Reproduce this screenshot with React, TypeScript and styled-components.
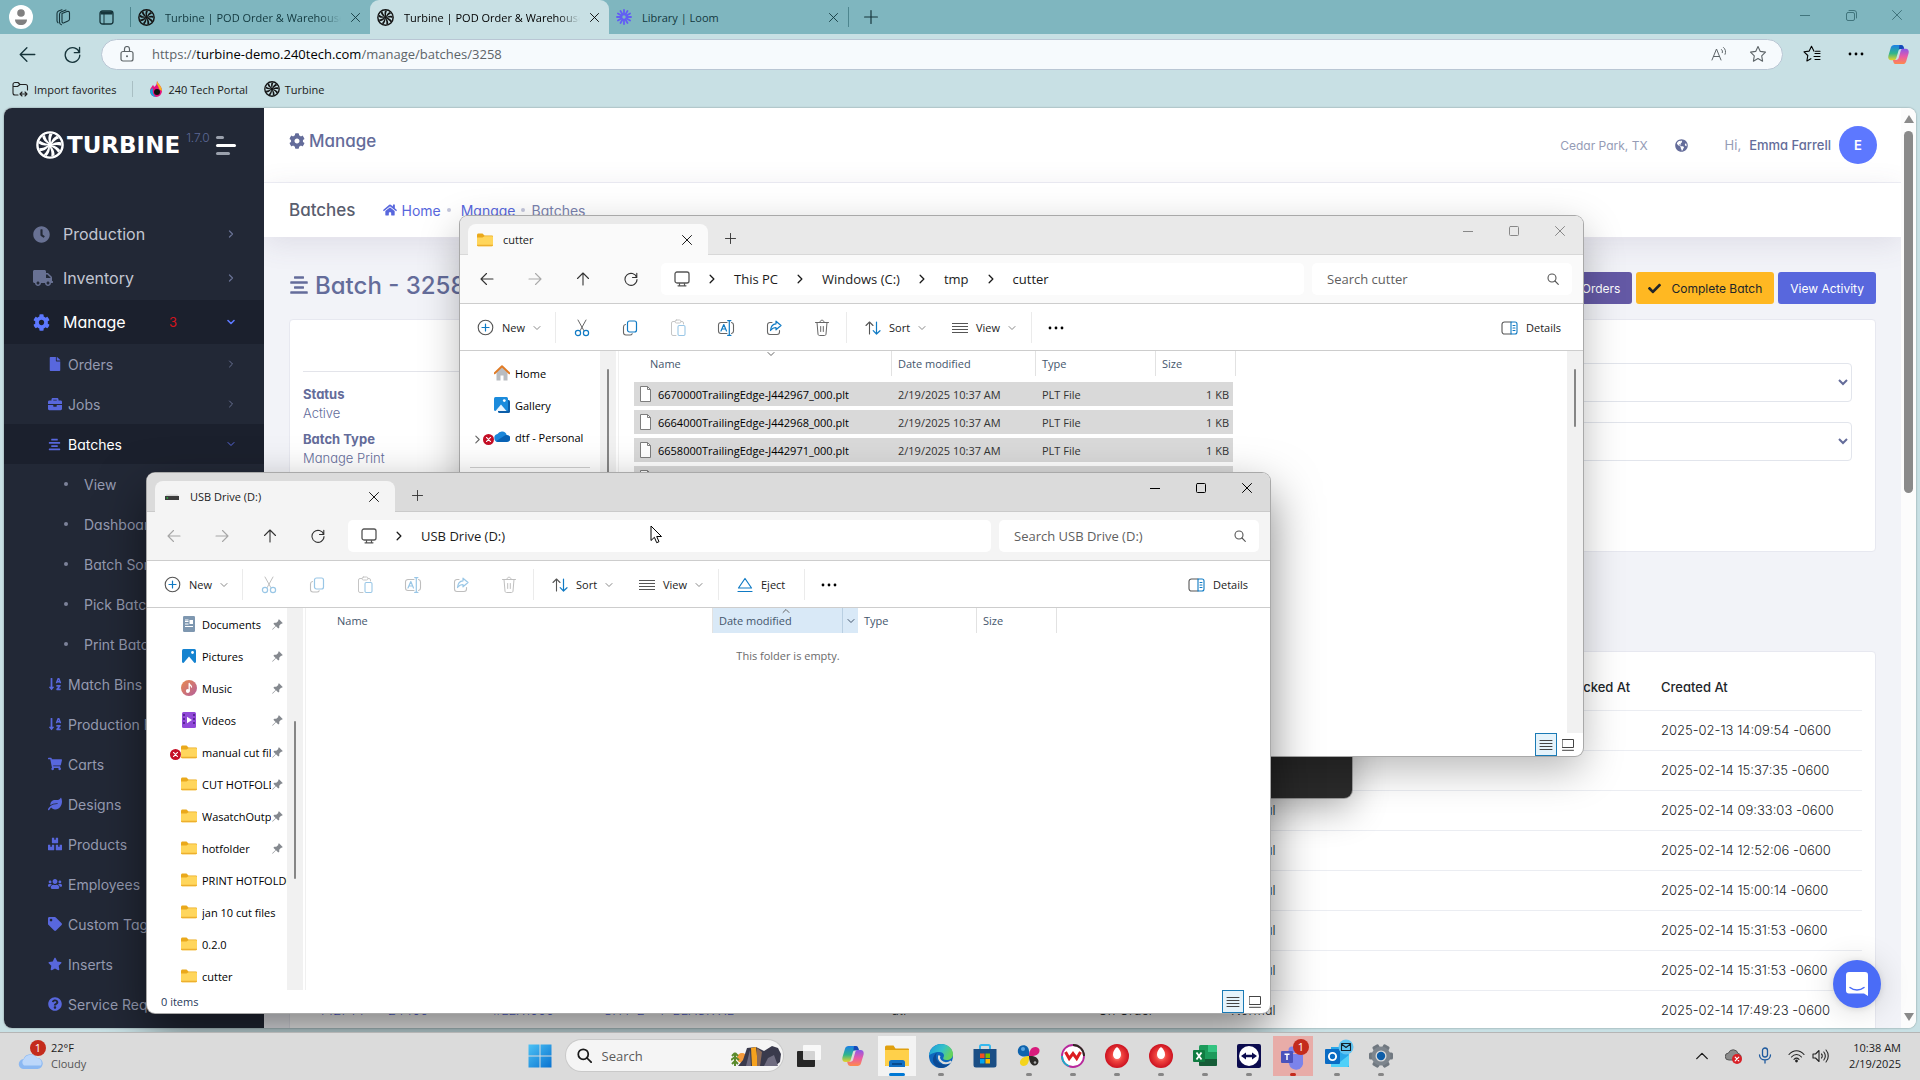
import React from "react";
import styled, { createGlobalStyle, css } from "styled-components";
import {
  FaAlignCenter,
  FaBoxes,
  FaBriefcase,
  FaCheck,
  FaClock,
  FaCog,
  FaFile,
  FaGlobeAmericas,
  FaHome,
  FaLeaf,
  FaQuestionCircle,
  FaShoppingCart,
  FaSortAlphaDown,
  FaStar,
  FaTag,
  FaTruck,
  FaUsers,
} from "react-icons/fa";

const systemFont = `"Open Sans", "Noto Sans", sans-serif`;
const appFont = `Inter, "Open Sans", sans-serif`;

const GlobalStyle = createGlobalStyle`
  * { box-sizing: border-box; }
  html, body, #root { height: 100%; }
  body { margin: 0; overflow: hidden; font-family: ${systemFont}; font-size: 11px; color: #1b1b1b; }
  button, input, select { font: inherit; color: inherit; margin: 0; padding: 0; border: 0; background: none; }
  a { color: inherit; text-decoration: none; }
  ul, dl, dd, h1, h2 { margin: 0; padding: 0; list-style: none; }
  svg { display: block; flex: none; }
`;

/* ---------- shared drawings ---------- */

type IconProps = { size?: number; color?: string };

const stroke = (color = "currentColor", width = 1) => ({
  fill: "none",
  stroke: color,
  strokeWidth: width,
  strokeLinecap: "round" as const,
  strokeLinejoin: "round" as const,
});

const Close = ({ size = 10 }: IconProps) => (
  <svg width={size} height={size} viewBox="0 0 10 10"><path d="M.5.5l9 9M9.5.5l-9 9" {...stroke()} /></svg>
);
const Plus = ({ size = 12 }: IconProps) => (
  <svg width={size} height={size} viewBox="0 0 12 12"><path d="M6 .5v11M.5 6h11" {...stroke()} /></svg>
);
const Minimize = () => (
  <svg width="10" height="10" viewBox="0 0 10 10"><path d="M0 5.500h10" {...stroke()} /></svg>
);
const Maximize = () => (
  <svg width="10" height="10" viewBox="0 0 10 10"><rect x=".5" y=".5" width="9" height="9" rx="1" {...stroke()} /></svg>
);
const Restore = () => (
  <svg width="11" height="11" viewBox="0 0 11 11">
    <rect x=".5" y="2.5" width="8" height="8" rx="1.5" {...stroke()} />
    <path d="M3 .5h5a2.500 2.500 0 0 1 2.500 2.500v5" {...stroke()} />
  </svg>
);
const Chevron = ({ dir = "down", size = 8, width = 1 }: { dir?: "down" | "right" | "up"; size?: number; width?: number }) => {
  const d = { down: "M1 2.500l3 3 3-3", right: "M2.500 1l3 3-3 3", up: "M1 5.500l3-3 3 3" }[dir];
  return <svg width={size} height={size} viewBox="0 0 8 8"><path d={d} {...stroke("currentColor", width)} /></svg>;
};
const Arrow = ({ turn = 0, size = 14 }: { turn?: number; size?: number }) => (
  <svg width={size} height={size} viewBox="0 0 14 14">
    <path d="M13 7H1.200M6.500 1.500L1 7l5.500 5.500" transform={`rotate(${turn} 7 7)`} {...stroke("currentColor", 1.1)} />
  </svg>
);
const Reload = ({ size = 14 }: IconProps) => (
  <svg width={size} height={size} viewBox="0 0 14 14">
    <path d="M12.700 5.500A6 6 0 1 0 13 7.500M12.800 1.200v4.300H8.500" {...stroke("currentColor", 1.1)} />
  </svg>
);
const Magnifier = ({ size = 12, width = 1.1 }: IconProps & { width?: number }) => (
  <svg width={size} height={size} viewBox="0 0 12 12">
    <circle cx="5" cy="5" r="4" {...stroke("currentColor", width)} />
    <path d="M8 8l3.300 3.300" {...stroke("currentColor", width)} />
  </svg>
);

const Turbine = ({ size, ring, blade }: { size: number; ring: string; blade: string }) => (
  <svg width={size} height={size} viewBox="0 0 28 28">
    <circle cx="14" cy="14" r="12.600" fill="none" stroke={ring} strokeWidth="2.400" />
    {Array.from({ length: 9 }, (_, i) => (
      <path key={i} d="M13.400 12C12 8.500 12 5.500 13.400 2.500l3.200.5c-1.600 3-2 6-1.600 9z" fill={blade} transform={`rotate(${i * 40} 14 14)`} />
    ))}
    <circle cx="14" cy="14" r="2.400" fill={ring} />
  </svg>
);

const Loom = () => (
  <svg width="16" height="16" viewBox="0 0 16 16">
    {Array.from({ length: 12 }, (_, i) => (
      <path key={i} d="M8 1v4.500" stroke="#625df5" strokeWidth="1.800" strokeLinecap="round" transform={`rotate(${i * 30} 8 8)`} />
    ))}
    <circle cx="8" cy="8" r="2.800" fill="none" stroke="#625df5" strokeWidth="1.200" />
  </svg>
);

const Copilot = ({ size = 24 }: IconProps) => (
  <svg width={size} height={size} viewBox="0 0 24 24">
    <defs>
      <linearGradient id="copilotA" x1="0" y1="0" x2="0" y2="1">
        <stop offset="0" stopColor="#1c7fe8" /><stop offset=".55" stopColor="#2fb58b" /><stop offset="1" stopColor="#e8d32a" />
      </linearGradient>
      <linearGradient id="copilotB" x1="0" y1="0" x2="0" y2="1">
        <stop offset="0" stopColor="#8a58e8" /><stop offset=".5" stopColor="#e85aa8" /><stop offset="1" stopColor="#ff8a4a" />
      </linearGradient>
    </defs>
    <path d="M7.500 2h7.200c1.300 0 2.100.8 2.500 2l.7 2.300h-3.400c-1.600 0-2.300.8-2.700 2.200L9.700 16c-.4 1.300-1.200 2-2.500 2H4.500C2 18 .8 16 1.400 13.500L4 4.700C4.500 3 5.800 2 7.500 2z" fill="url(#copilotA)" />
    <path d="M13 2h1.700c1.300 0 2.100.8 2.500 2l.7 2.300h-5.500z" fill="#1648b8" />
    <path d="M16.500 22H9.300c-1.300 0-2.100-.8-2.500-2l-.7-2.300h3.400c1.600 0 2.300-.8 2.700-2.200L14.300 8c.4-1.300 1.200-2 2.500-2h2.700c2.500 0 3.700 2 3.100 4.500L20 19.300c-.5 1.700-1.800 2.700-3.500 2.700z" fill="url(#copilotB)" />
  </svg>
);

const Folder = ({ size = 16 }: IconProps) => (
  <svg width={size} height={size} viewBox="0 0 16 16">
    <path d="M0 3.200C0 2 .6 1.500 1.500 1.500h4l2 2H15a1 1 0 0 1 1 1V13H0z" fill="#eaa91c" />
    <path d="M0 5.500h5.500l2-1.200H15a1 1 0 0 1 1 1V13a1.200 1.200 0 0 1-1.200 1.200H1.200A1.200 1.200 0 0 1 0 13z" fill="#ffd65c" />
    <path d="M0 12.800h16a1.300 1.300 0 0 1-1.200 1.400H1.200A1.300 1.300 0 0 1 0 12.800z" fill="#edb02e" />
  </svg>
);
const ErrorDot = ({ size = 11 }: IconProps) => (
  <svg width={size} height={size} viewBox="0 0 12 12">
    <circle cx="6" cy="6" r="6" fill="#c50f26" />
    <path d="M3.800 3.800l4.400 4.400M8.200 3.800L3.800 8.200" {...stroke("#fff", 1.2)} />
  </svg>
);
const Pin = () => (
  <svg width="11" height="11" viewBox="0 0 11 11">
    <path d="M7 .3L10.700 4l-.7.800-.9-.1-1.900 2 .1 2-1 .9L4 7.300.6 10.700l-.4-.4L3.600 7 1.400 4.700l.9-1 2 .1 2-1.900L6.200 1z" fill="#85898f" />
  </svg>
);

/* ---------- desktop ---------- */

const Desktop = styled.div`
  position: relative;
  height: 100vh;
  display: flex;
  flex-direction: column;
  overflow: hidden;
  background: #c8e0e4;
`;

/* ---------- browser ---------- */

const Browser = styled.section`
  flex: 1;
  min-height: 0;
  display: flex;
  flex-direction: column;
`;
const TabStrip = styled.div`
  height: 34px;
  flex: none;
  display: flex;
  align-items: stretch;
  background: #7fb6bf;
`;
const StripButton = styled.button<{ $w: number }>`
  width: ${(p) => p.$w}px;
  display: grid;
  place-items: center;
  color: #16343a;
`;
const BrowserTab = styled.div<{ $active?: boolean }>`
  width: 239px;
  padding: 0 10px 0 7px;
  display: flex;
  align-items: center;
  gap: 10px;
  color: #12383e;
  ${(p) => p.$active && css`background: #c8e0e4; border-radius: 9px 9px 0 0; color: #000;`}
`;
const TabTitle = styled.span<{ $fade?: boolean }>`
  flex: 1;
  min-width: 0;
  overflow: hidden;
  white-space: nowrap;
  ${(p) => p.$fade && css`mask-image: linear-gradient(90deg, #000 88%, transparent);`}
`;
const Bar = styled.span<{ $h: number; $c: string }>`
  width: 1px;
  height: ${(p) => p.$h}px;
  align-self: center;
  background: ${(p) => p.$c};
`;
const Spacer = styled.span`flex: 1;`;
const CaptionButtons = styled.div<{ $c: string }>`
  display: flex;
  color: ${(p) => p.$c};
  button { width: 46px; height: 30px; display: grid; place-items: center; }
`;

const AddressRow = styled.div`
  height: 40px;
  flex: none;
  display: flex;
  align-items: center;
  padding-left: 5px;
`;
const AddressBox = styled.label`
  flex: 1;
  height: 31px;
  margin: 0 6px 0 6px;
  padding: 0 15px 0 18px;
  display: flex;
  align-items: center;
  gap: 18px;
  border-radius: 16px;
  border: 1px solid #b9c6d4;
  background: #f6fafd;
  color: #5d6468;
  font-size: 13px;
`;
const Url = styled.span`
  flex: 1;
  b { font-weight: 400; color: #000; }
`;
const Bookmarks = styled.nav`
  height: 34px;
  flex: none;
  display: flex;
  align-items: center;
  gap: 16px;
  padding: 0 0 4px 12px;
  font-size: 11px;
  a { display: flex; align-items: center; gap: 5px; }
`;
const Viewport = styled.main`
  flex: 1;
  min-height: 0;
  margin: 0 4px 4px;
  display: flex;
  overflow: hidden;
  border-radius: 8px;
  background: #fff;
  box-shadow: 0 0 2px rgba(0, 0, 0, 0.4);
  font-family: ${appFont};
  font-feature-settings: "cv11";
`;

/* ---------- turbine sidebar ---------- */

const Sidebar = styled.aside`
  width: 260px;
  flex: none;
  background: #222836;
  overflow: hidden;
`;
const Brand = styled.div`
  height: 104px;
  padding: 23px 28px 0 32px;
  display: flex;
  align-items: flex-start;
  color: #fff;
`;
const Wordmark = styled.span`
  margin-left: 3px;
  font: 700 23px/28px "DejaVu Sans", sans-serif;
`;
const Version = styled.span`
  flex: 1;
  margin-left: 6px;
  font-size: 12px;
  line-height: 14px;
  font-weight: 300;
  color: #5d6896;
`;
const Burger = styled.button`
  width: 20px;
  height: 28px;
  display: flex;
  flex-direction: column;
  justify-content: center;
  gap: 5px;
  i { height: 3px; border-radius: 2px; background: #9aa0ac; width: 8px; }
  i:nth-child(2) { background: #fff; width: 20px; }
  i:nth-child(3) { width: 14px; }
`;
const MainLink = styled.a<{ $open?: boolean }>`
  height: 44px;
  padding: 0 29px;
  display: grid;
  grid-template-columns: 30px 106px 1fr 8px;
  align-items: center;
  font-size: 16px;
  color: ${(p) => (p.$open ? "#fff" : "#c2c6d2")};
  background: ${(p) => (p.$open ? "#1b202d" : "none")};
  svg { color: ${(p) => (p.$open ? "#5d78ff" : "#687193")}; }
  em { font-size: 13px; font-style: normal; color: #d3141e; }
`;
const SubLink = styled.a<{ $open?: boolean }>`
  height: 40px;
  padding: 0 29px 0 44px;
  display: flex;
  align-items: center;
  gap: 6px;
  font-size: 14px;
  color: ${(p) => (p.$open ? "#fff" : "#959ab0")};
  background: ${(p) => (p.$open ? "#1b202d" : "none")};
  white-space: nowrap;
  > svg { color: #5867dd; }
  > svg:last-child { color: ${(p) => (p.$open ? "#5867dd" : "#687193")}; }
`;
const SubIcon = styled.span`
  width: 14px;
  flex: none;
  color: #5867dd;
`;
const LeafLink = styled(SubLink)`
  padding-left: 60px;
  gap: 16px;
  &::before { content: ""; width: 4px; height: 4px; border-radius: 50%; background: #7d829a; }
`;

/* ---------- turbine content ---------- */

const Content = styled.div`
  flex: 1;
  min-width: 0;
  display: flex;
  flex-direction: column;
  overflow: hidden;
  background: #f2f3f8;
  color: #646c9a;
`;
const TopBar = styled.header`
  height: 75px;
  flex: none;
  padding: 0 24px 0 25px;
  display: flex;
  align-items: center;
  background: #fff;
  border-bottom: 1px solid #eff0f6;
  font-size: 13px;
  h1 { flex: 1; padding-bottom: 8px; display: flex; align-items: center; gap: 4px; font-size: 17px; font-weight: 500; }
`;
const Place = styled.span`color: #959cb6; margin-right: 27px; font-size: 12px;`;
const Greeting = styled.span`
  display: flex;
  gap: 8px;
  margin: 0 8px 0 37px;
  color: #959cb6;
  b { font-weight: 500; color: #646c9a; }
`;
const Avatar = styled.button`
  width: 38px;
  height: 38px;
  border-radius: 50%;
  background: #5d78ff;
  color: #fff;
  font-weight: 600;
`;
const SubHeader = styled.div`
  height: 54px;
  flex: none;
  padding: 0 25px;
  display: flex;
  align-items: center;
  background: #fff;
  box-shadow: 0 6px 30px rgba(82, 63, 105, 0.12);
  h2 { margin-right: 28px; font-size: 17px; font-weight: 500; color: #595d6e; }
`;
const Crumbs = styled.nav`
  display: flex;
  align-items: center;
  gap: 6px;
  font-size: 14px;
  color: #7a82ae;
  a { display: flex; align-items: center; gap: 4px; color: #5867dd; }
  i { width: 4px; height: 4px; border-radius: 50%; background: #c4c7dc; }
`;
const Body = styled.div`
  flex: 1;
  min-height: 0;
  padding: 35px 25px 0;
`;
const TitleRow = styled.div`
  height: 32px;
  display: flex;
  align-items: center;
  gap: 4px;
  h2 { flex: 1; display: flex; align-items: center; gap: 6px; padding-bottom: 6px; font-size: 24px; font-weight: 500; }
`;
const Action = styled.button<{ $bg: string; $dark?: boolean }>`
  height: 32px;
  padding: 0 12px;
  display: flex;
  align-items: center;
  gap: 10px;
  border-radius: 3px;
  background: ${(p) => p.$bg};
  color: ${(p) => (p.$dark ? "#212529" : "#fff")};
  font-size: 12px;
`;
const Card = styled.section<{ $top: number }>`
  margin-top: ${(p) => p.$top}px;
  border: 1px solid #e7e8f0;
  border-radius: 4px;
  background: #fff;
`;
const DetailCard = styled(Card)`
  min-height: 233px;
  display: grid;
  grid-template-columns: 1fr 1fr;
`;
const Facts = styled.dl`
  margin: 0 14px 0 13px;
  font-size: 13px;
  line-height: 19px;
  &::before { content: ""; display: block; height: 51px; margin-bottom: 13px; border-bottom: 1px solid #e3e4ea; }
  dt { font-weight: 700; }
  dd { margin-bottom: 7px; font-weight: 300; }
`;
const Pickers = styled.div`
  padding: 43px 23px 0 14px;
  display: flex;
  flex-direction: column;
  gap: 20px;
`;
const Picker = styled.select`
  width: 100%;
  height: 39px;
  border: 1px solid #e2e5ec;
  border-radius: 4px;
  background: #fff;
`;
const TableCard = styled(Card)`
  padding: 13px;
  table { width: 100%; table-layout: fixed; border-collapse: collapse; font-size: 13px; color: #212529; white-space: nowrap; }
  th { height: 45px; padding: 0 14px; font-weight: 500; text-align: left; }
  td { height: 40px; padding: 0 14px; font-weight: 300; border-top: 1px solid #ebedf2; }
  td a { color: #5867dd; }
`;
const ScrollRail = styled.div`
  width: 15px;
  flex: none;
  padding: 7px 3px;
  display: flex;
  flex-direction: column;
  align-items: center;
  gap: 8px;
  background: #fcfcfc;
  &::before { content: ""; border: 5px solid transparent; border-top: 0; border-bottom: 8px solid #8a8a8a; }
  &::after { content: ""; margin-top: auto; border: 5px solid transparent; border-bottom: 0; border-top: 8px solid #8a8a8a; }
  i { width: 9px; height: 40%; border-radius: 5px; background: #8a8a8a; }
`;
const ChatButton = styled.button`
  position: absolute;
  right: 39px;
  bottom: 72px;
  width: 48px;
  height: 48px;
  border-radius: 50%;
  display: grid;
  place-items: center;
  background: #4a6cf7;
  box-shadow: 0 1px 6px rgba(0, 0, 0, 0.1), 0 2px 32px rgba(0, 0, 0, 0.16);
`;

/* ---------- explorer windows ---------- */

const DarkPanel = styled.div`
  position: absolute;
  left: 900px;
  top: 500px;
  width: 452px;
  height: 298px;
  border-radius: 8px;
  background: #2a2a2a;
  box-shadow: 0 12px 36px rgba(0, 0, 0, 0.3), 0 0 0 1px rgba(120, 120, 120, 0.5);
`;
const Win = styled.section<{ $x: number; $y: number; $focus?: boolean }>`
  position: absolute;
  left: ${(p) => p.$x}px;
  top: ${(p) => p.$y}px;
  width: 1123px;
  height: 540px;
  display: flex;
  flex-direction: column;
  overflow: hidden;
  border-radius: 8px;
  background: #fff;
  box-shadow: 0 0 0 1px #a9a9a9,
    ${(p) => (p.$focus ? "0 20px 48px rgba(0, 0, 0, 0.5)" : "0 14px 40px rgba(0, 0, 0, 0.28)")};
`;
const TitleBar = styled.div<{ $focus?: boolean }>`
  height: 39px;
  flex: none;
  padding-left: 8px;
  display: flex;
  background: ${(p) => (p.$focus ? "#dbdbdb" : "#e9e9e9")};
  border-bottom: 1px solid ${(p) => (p.$focus ? "#cacaca" : "#d8d8d8")};
`;
const WinTab = styled.div<{ $focus?: boolean }>`
  width: 240px;
  height: 31px;
  margin-top: 8px;
  padding: 0 8px 0 9px;
  display: flex;
  align-items: center;
  gap: 10px;
  border-radius: 8px 8px 0 0;
  background: ${(p) => (p.$focus ? "#f4f4f4" : "#fafafa")};
  span { flex: 1; }
  button { padding: 8px; }
`;
const NewTab = styled.button`
  width: 45px;
  height: 31px;
  margin-top: 7px;
  display: grid;
  place-items: center;
  color: #333;
`;
const WinRow = styled.div<{ $focus?: boolean }>`
  height: 49px;
  flex: none;
  padding: 0 11px 0 3px;
  display: flex;
  align-items: center;
  background: ${(p) => (p.$focus ? "#f4f4f4" : "#fafafa")};
  border-bottom: 1px solid #cdcdcd;
`;
const NavButton = styled.button<{ $off?: boolean }>`
  width: 48px;
  height: 32px;
  display: grid;
  place-items: center;
  color: #333;
  opacity: ${(p) => (p.$off ? 0.4 : 1)};
`;
const PathBox = styled.nav`
  flex: 1;
  height: 32px;
  margin: 0 8px 0 6px;
  padding-left: 13px;
  display: flex;
  align-items: center;
  border-radius: 5px;
  background: #fff;
  font-size: 13px;
`;
const PathStep = styled.span`
  width: 44px;
  display: grid;
  place-items: center;
`;
const SearchBox = styled.label`
  width: 260px;
  height: 32px;
  padding: 0 13px 0 15px;
  display: flex;
  align-items: center;
  border-radius: 5px;
  background: #fff;
  font-size: 13px;
  color: #555;
  input { flex: 1; min-width: 0; outline: 0; }
  input::placeholder { color: #5f5f5f; opacity: 1; }
`;
const Commands = styled.div`
  height: 47px;
  flex: none;
  padding: 1px 22px 0 17px;
  display: flex;
  align-items: center;
  border-bottom: 1px solid #cdcdcd;
`;
const Command = styled.button<{ $w?: number }>`
  width: ${(p) => (p.$w ? p.$w + "px" : "auto")};
  height: 32px;
  display: flex;
  align-items: center;
  gap: 8px;
  svg:last-child:not(:first-child) { color: #888; }
`;
const CommandIcon = styled.button<{ $off?: boolean }>`
  width: 48px;
  height: 32px;
  display: grid;
  place-items: center;
  color: #555;
  opacity: ${(p) => (p.$off ? 0.42 : 1)};
`;
const Rule = styled.span<{ $after: number }>`
  width: 1px;
  height: 31px;
  margin-right: ${(p) => p.$after}px;
  background: #ebebeb;
`;
const Panes = styled.div`
  flex: 1;
  min-height: 0;
  display: flex;
`;
const NavPane = styled.ul<{ $top: number }>`
  width: 140px;
  flex: none;
  padding-top: ${(p) => p.$top}px;
  overflow: hidden;
  hr { margin: 13px 10px 0; border: 0; border-top: 1px solid #d0d0d0; }
`;
const NavItem = styled.li`
  height: 32px;
  padding-bottom: 2px;
  display: grid;
  grid-template-columns: 34px 16px 1fr auto;
  align-items: center;
  white-space: nowrap;
  > a { margin-left: 5px; overflow: hidden; color: #000; }
  > svg:last-child { margin: 0 4px 0 1px; }
`;
const Lead = styled.span`
  display: flex;
  align-items: center;
  justify-content: flex-end;
  gap: 1px;
  padding-top: 4px;
  color: #666;
`;
const Rail = styled.div<{ $from: number; $size: number }>`
  width: 16px;
  flex: none;
  padding: ${(p) => p.$from}px 7px 0;
  background: #f1f1f1;
  overflow: hidden;
  i { display: block; width: 2px; height: ${(p) => p.$size}px; border-radius: 1px; background: #868686; }
`;
const Listing = styled.div`
  flex: 1;
  min-width: 0;
  margin-left: 2px;
  border-left: 1px solid #f0f0f0;
  overflow: hidden;
`;
const FileTable = styled.table`
  table-layout: fixed;
  width: 617px;
  border-collapse: separate;
  border-spacing: 0;
  white-space: nowrap;
  thead th {
    position: relative;
    height: 25px;
    padding: 0 0 1px 6px;
    border-right: 1px solid #e2e2e2;
    font-weight: 400;
    text-align: left;
    color: #44566c;
  }
  tbody::before { content: ""; display: block; height: 4px; }
  tbody td { height: 28px; padding: 2px 0 2px 0; }
`;
const SortMark = styled.span<{ $at: number }>`
  position: absolute;
  left: ${(p) => p.$at}%;
  top: -1px;
  margin-left: -4px;
  color: #666;
`;
const NameHead = styled.th`
  && { padding-left: 31px; }
`;
const DateHead = styled.th<{ $hot?: boolean }>`
  ${(p) => p.$hot && css`&& { background: #d9e9f7; border-right: 0; }`}
`;
const DropMark = styled.span`
  position: absolute;
  right: 0;
  top: 0;
  width: 16px;
  height: 100%;
  display: grid;
  place-items: center;
  border-left: 1px solid #b9cfe2;
`;
const Cell = styled.span<{ $first?: boolean; $right?: boolean }>`
  height: 24px;
  display: flex;
  align-items: center;
  gap: 6px;
  padding: ${(p) => (p.$right ? "0 4px 0 6px" : p.$first ? "0 5px" : "0 6px")};
  margin-left: ${(p) => (p.$first ? 15 : 0)}px;
  margin-right: ${(p) => (p.$right ? 3 : 0)}px;
  justify-content: ${(p) => (p.$right ? "flex-end" : "flex-start")};
  background: #d9d9d9;
  color: ${(p) => (p.$first ? "#000" : "#333")};
`;
const Empty = styled.p`
  margin: 15px 0 0;
  text-align: center;
  color: #6a6a6a;
`;
const StatusBar = styled.footer`
  height: 23px;
  flex: none;
  padding: 0 9px 0 14px;
  display: flex;
  align-items: center;
  gap: 5px;
  color: #27395a;
`;
const ViewToggle = styled.button<{ $on?: boolean }>`
  width: ${(p) => (p.$on ? 22 : 12)}px;
  height: 23px;
  display: grid;
  place-items: center;
  color: #444;
  ${(p) => p.$on && css`border: 1px solid #1a7ab5; background: #e5f3fb;`}
`;

const blue = "#0f7ac4";

const NewIcon = () => (
  <svg width="17" height="17" viewBox="0 0 17 17">
    <circle cx="8.500" cy="8.500" r="7.300" {...stroke("#555", 1.1)} />
    <path d="M8.500 5v7M5 8.500h7" {...stroke(blue, 1.2)} />
  </svg>
);
const Cut = () => (
  <svg width="16" height="18" viewBox="0 0 16 18">
    <path d="M4 1l5.800 10.500M12 1L6.200 11.500" {...stroke("#666")} />
    <circle cx="4" cy="14" r="2.600" {...stroke(blue, 1.2)} /><circle cx="12" cy="14" r="2.600" {...stroke(blue, 1.2)} />
  </svg>
);
const Copy = () => (
  <svg width="16" height="16" viewBox="0 0 16 16">
    <rect x="5.500" y="1" width="9" height="11" rx="2" {...stroke(blue, 1.2)} />
    <path d="M3.500 4.500C2 4.700 1.500 5.500 1.500 7v5.500c0 1.500.8 2.500 2.500 2.500h4c1 0 1.800-.4 2.200-1.200" {...stroke("#666", 1.1)} />
  </svg>
);
const Paste = () => (
  <svg width="16" height="18" viewBox="0 0 16 18">
    <path d="M5 2.500H3A1.500 1.500 0 0 0 1.500 4v11A1.500 1.500 0 0 0 3 16.500h3M11 2.500h1A1.500 1.500 0 0 1 13.500 4v1" {...stroke("#777")} />
    <rect x="5" y="1" width="6" height="3" rx="1.500" {...stroke("#777")} />
    <rect x="8" y="6.500" width="7" height="10" rx="1.200" {...stroke(blue, 1.1)} />
  </svg>
);
const Rename = () => (
  <svg width="18" height="16" viewBox="0 0 18 16">
    <path d="M10 2.500H4A2.500 2.500 0 0 0 1.500 5v6A2.500 2.500 0 0 0 4 13.500h6M14.500 2.500a2.500 2.500 0 0 1 2 2.500v6a2.500 2.500 0 0 1-2 2.500" {...stroke("#666", 1.1)} />
    <path d="M12.300.600v14.800M10.700.6h3.200M10.700 15.400h3.200" {...stroke(blue, 1.2)} />
    <path d="M4 11l2.800-6.500L9.500 11M5 9h3.600" {...stroke(blue, 1.2)} />
  </svg>
);
const Share = () => (
  <svg width="16" height="16" viewBox="0 0 16 16">
    <path d="M6 2.500H4A2.500 2.500 0 0 0 1.500 5v7A2.500 2.500 0 0 0 4 14.500h7a2.500 2.500 0 0 0 2.500-2.500v-1.500" {...stroke("#666", 1.1)} />
    <path d="M10 1.200l5 4.300-5 4.300V7.500C7.500 7.500 6 8.500 4.500 10.500 4.800 6.500 6.800 4 10 3.800z" {...stroke(blue, 1.2)} />
  </svg>
);
const Trash = () => (
  <svg width="16" height="18" viewBox="0 0 16 18">
    <path d="M1.500 3.500h13M6 3c0-2.500 4-2.500 4 0M3 3.500l1 11.500c.1 1 .7 1.500 1.500 1.500h5c.8 0 1.400-.5 1.500-1.500l1-11.500M6.700 7.500v5M9.300 7.500v5" {...stroke("#666")} />
  </svg>
);
const SortIcon = () => (
  <svg width="16" height="16" viewBox="0 0 16 16">
    <path d="M4.500 14V2M1 5.500L4.500 2 8 5.500" {...stroke("#555", 1.1)} />
    <path d="M11.500 2v12M8.200 10.700l3.300 3.300 3.500-3.300" {...stroke(blue, 1.2)} />
  </svg>
);
const ViewIcon = () => (
  <svg width="16" height="14" viewBox="0 0 16 14"><path d="M0 2.500h16M0 5.500h16M0 8.500h16M0 11.500h16" {...stroke("#555")} /></svg>
);
const EjectIcon = () => (
  <svg width="16" height="16" viewBox="0 0 16 16"><path d="M8 1.500L14.500 11h-13zM1 14.500h14" {...stroke(blue, 1.2)} /></svg>
);
const DetailsIcon = () => (
  <svg width="17" height="14" viewBox="0 0 17 14">
    <path d="M10 1H3.500A2.500 2.500 0 0 0 1 3.500v7A2.500 2.500 0 0 0 3.500 13H10" {...stroke("#555", 1.1)} />
    <path d="M10 1h4a2 2 0 0 1 2 2v8a2 2 0 0 1-2 2h-4zM12 4.500h2M12 7h2M12 9.500h2" {...stroke(blue, 1.1)} />
  </svg>
);
const Dots = () => (
  <svg width="16" height="4" viewBox="0 0 16 4"><circle cx="2" cy="2" r="1.400" /><circle cx="8" cy="2" r="1.400" /><circle cx="14" cy="2" r="1.400" /></svg>
);
const Monitor = () => (
  <svg width="16" height="16" viewBox="0 0 16 16">
    <rect x="1" y="1" width="14" height="11" rx="2" {...stroke("#555", 1.3)} />
    <path d="M5.500 12.500v2M10.500 12.500v2M4 14.800h8" {...stroke("#555", 1.2)} />
  </svg>
);
const PageIcon = () => (
  <svg width="13" height="16" viewBox="0 0 13 16">
    <path d="M1.500.5h7l3 3v12h-10z" fill="#fff" stroke="#7d7d7d" /><path d="M8.500.5v3h3" fill="none" stroke="#7d7d7d" />
  </svg>
);
const DriveIcon = () => (
  <svg width="16" height="16" viewBox="0 0 16 16">
    <path d="M2.500 5.500h11L15 7.500H1z" fill="#d5d5d5" /><rect x="1" y="7" width="14" height="4" fill="#3c3c3c" /><rect x="2.500" y="8.300" width="1.600" height="1.300" fill="#28c840" />
  </svg>
);
const HomeIcon = () => (
  <svg width="16" height="16" viewBox="0 0 16 16">
    <path d="M2.500 7L8 2l5.500 5v8.500h-4v-5h-3v5h-4z" fill="#b9bcc0" /><path d="M.6 8.300L8 1.300l7.400 7" {...stroke("#e07b26", 2)} />
  </svg>
);
const PictureIcon = () => (
  <svg width="16" height="16" viewBox="0 0 16 16">
    <rect x="1" y="1" width="14" height="14" rx="1.500" fill="#1583d0" /><path d="M2.500 15L8 8.500l5.500 6.500z" fill="#fff" /><circle cx="11.500" cy="4.500" r="1.400" fill="#fff" />
  </svg>
);
const GalleryIcon = () => (
  <svg width="16" height="16" viewBox="0 0 16 16">
    <rect x="4" y="3" width="12" height="13" rx="1.500" fill="#0c5ea8" /><rect x="0" y="0" width="14" height="14" rx="1.500" fill="#1b8bdc" />
    <path d="M1.500 14L7 7.500l5.500 6.500z" fill="#e9f5ff" /><circle cx="10.300" cy="3.600" r="1.400" fill="#fff" />
  </svg>
);
const CloudBlue = () => (
  <svg width="16" height="16" viewBox="0 0 16 16">
    <path d="M4 13a4 4 0 0 1-.5-7.900A5 5 0 0 1 12.700 6 3.500 3.500 0 0 1 12.500 13z" fill="#1a86d9" /><path d="M2 12.300l8-5.300a4 4 0 0 1 2.700-1A3.500 3.500 0 0 1 12.500 13H4z" fill="#0a63b5" />
  </svg>
);
const DocIcon = () => (
  <svg width="16" height="16" viewBox="0 0 16 16">
    <rect x="2" y="0" width="12" height="16" rx="1.200" fill="#7e97b0" /><path d="M4 5.500h3.500M4 8h3.500M4 10.500h8M4 4h3.500" stroke="#fff" /><rect x="8.500" y="4" width="3.500" height="4" fill="#fff" />
  </svg>
);
const MusicIcon = () => (
  <svg width="16" height="16" viewBox="0 0 16 16">
    <defs><linearGradient id="music" x1="0" y1="0" x2="1" y2="1"><stop offset="0" stopColor="#e98a4e" /><stop offset="1" stopColor="#b45f9c" /></linearGradient></defs>
    <circle cx="8" cy="8" r="8" fill="url(#music)" /><circle cx="6.800" cy="11" r="1.900" fill="#fff" /><path d="M8.200 11V3.500c0 1.500 2.300 1.500 2.300 3.500" {...stroke("#fff", 1.3)} />
  </svg>
);
const VideoIcon = () => (
  <svg width="16" height="16" viewBox="0 0 16 16">
    <rect x="1" y="0" width="14" height="16" rx="1.500" fill="#9149d8" /><path d="M6 4.800l5 3.200-5 3.200z" fill="#fff" />
    <path d="M3 2v12M13 2v12" stroke="#4b1f86" strokeWidth="1.600" strokeDasharray="2 2" />
  </svg>
);
const CopyListIcon = () => (
  <svg width="14" height="12" viewBox="0 0 14 12"><path d="M1 1.500h12M1 4.500h12M1 7.500h12M1 10.500h12" {...stroke()} /></svg>
);
const ThumbIcon = () => (
  <svg width="12" height="12" viewBox="0 0 12 12"><path d="M.5.5h11v8H.5zM.5 11.300h11" {...stroke()} /></svg>
);

type NavPlace = { label: string; icon: React.ReactNode; pinned?: boolean; failed?: boolean; expandable?: boolean };

const usbPlaces: NavPlace[] = [
  { label: "Documents", icon: <DocIcon />, pinned: true },
  { label: "Pictures", icon: <PictureIcon />, pinned: true },
  { label: "Music", icon: <MusicIcon />, pinned: true },
  { label: "Videos", icon: <VideoIcon />, pinned: true },
  { label: "manual cut files", icon: <Folder />, pinned: true, failed: true },
  { label: "CUT HOTFOLDER", icon: <Folder />, pinned: true },
  { label: "WasatchOutput", icon: <Folder />, pinned: true },
  { label: "hotfolder", icon: <Folder />, pinned: true },
  { label: "PRINT HOTFOLDER", icon: <Folder /> },
  { label: "jan 10 cut files", icon: <Folder /> },
  { label: "0.2.0", icon: <Folder /> },
  { label: "cutter", icon: <Folder /> },
];
const cutterPlaces: NavPlace[] = [
  { label: "Home", icon: <HomeIcon /> },
  { label: "Gallery", icon: <GalleryIcon /> },
  { label: "dtf - Personal", icon: <CloudBlue />, failed: true, expandable: true },
];
const files = [
  "6670000TrailingEdge-J442967_000.plt",
  "6664000TrailingEdge-J442968_000.plt",
  "6658000TrailingEdge-J442971_000.plt",
  "6652000TrailingEdge-J442972_000.plt",
];

type ExplorerProps = {
  x: number;
  y: number;
  focus?: boolean;
  title: string;
  icon: React.ReactNode;
  path: string[];
  places: NavPlace[];
  files?: string[];
};

function Explorer({ x, y, focus, title, icon, path, places, files: rows = [] }: ExplorerProps) {
  const off = rows.length === 0;
  const columns = off ? [407, 145, 119, 80] : [273, 144, 120, 80];
  return (
    <Win $x={x} $y={y} $focus={focus}>
      <TitleBar $focus={focus}>
        <WinTab $focus={focus}>
          {icon}
          <span>{title}</span>
          <button aria-label="Close tab"><Close /></button>
        </WinTab>
        <NewTab aria-label="New tab"><Plus size={11} /></NewTab>
        <Spacer />
        <CaptionButtons $c={focus ? "#000" : "#888"}>
          <button aria-label="Minimize"><Minimize /></button>
          <button aria-label="Maximize"><Maximize /></button>
          <button aria-label="Close"><Close /></button>
        </CaptionButtons>
      </TitleBar>
      <WinRow $focus={focus}>
        <NavButton aria-label="Back" $off={off}><Arrow /></NavButton>
        <NavButton aria-label="Forward" $off><Arrow turn={180} /></NavButton>
        <NavButton aria-label="Up"><Arrow turn={90} /></NavButton>
        <NavButton aria-label="Refresh"><Reload /></NavButton>
        <PathBox>
          <Monitor />
          {path.map((p) => (
            <React.Fragment key={p}>
              <PathStep><Chevron dir="right" size={10} /></PathStep>
              <a href="#">{p}</a>
            </React.Fragment>
          ))}
        </PathBox>
        <SearchBox>
          <input placeholder={`Search ${title}`} aria-label={`Search ${title}`} />
          <Magnifier />
        </SearchBox>
      </WinRow>
      <Commands>
        <Command $w={78}><NewIcon />New<Chevron /></Command>
        <Rule $after={2} />
        <CommandIcon aria-label="Cut" $off={off}><Cut /></CommandIcon>
        <CommandIcon aria-label="Copy" $off={off}><Copy /></CommandIcon>
        <CommandIcon aria-label="Paste" $off><Paste /></CommandIcon>
        <CommandIcon aria-label="Rename" $off={off}><Rename /></CommandIcon>
        <CommandIcon aria-label="Share" $off={off}><Share /></CommandIcon>
        <CommandIcon aria-label="Delete" $off={off}><Trash /></CommandIcon>
        <Rule $after={18} />
        <Command $w={87}><SortIcon />Sort<Chevron /></Command>
        <Command $w={79}><ViewIcon />View<Chevron /></Command>
        {off && (
          <>
            <Rule $after={18} />
            <Command $w={67}><EjectIcon />Eject</Command>
          </>
        )}
        <Rule $after={0} />
        <CommandIcon aria-label="See more"><Dots /></CommandIcon>
        <Spacer />
        <Command><DetailsIcon />Details</Command>
      </Commands>
      <Panes>
        <NavPane $top={off ? 1 : 7}>
          {places.map((p) => (
            <NavItem key={p.label}>
              <Lead>
                {p.expandable && <Chevron dir="right" size={9} />}
                {p.failed && <ErrorDot />}
              </Lead>
              {p.icon}
              <a href="#">{p.label}</a>
              {p.pinned && <Pin />}
            </NavItem>
          ))}
          {!off && <hr />}
        </NavPane>
        <Rail $from={off ? 113 : 18} $size={off ? 158 : 210}><i /></Rail>
        <Listing>
          <FileTable>
            <colgroup>{columns.map((w) => <col key={w} width={w} />)}</colgroup>
            <thead>
              <tr>
                <NameHead>Name{!off && <SortMark $at={56}><Chevron /></SortMark>}</NameHead>
                <DateHead $hot={off}>
                  Date modified
                  {off && <SortMark $at={50}><Chevron dir="up" /></SortMark>}
                  {off && <DropMark><Chevron /></DropMark>}
                </DateHead>
                <th>Type</th>
                <th>Size</th>
              </tr>
            </thead>
            {!off && (
              <tbody>
                {rows.map((f) => (
                  <tr key={f}>
                    <td><Cell $first><PageIcon />{f}</Cell></td>
                    <td><Cell>2/19/2025 10:37 AM</Cell></td>
                    <td><Cell>PLT File</Cell></td>
                    <td><Cell $right>1 KB</Cell></td>
                  </tr>
                ))}
              </tbody>
            )}
          </FileTable>
          {off && <Empty>This folder is empty.</Empty>}
        </Listing>
        {!off && <Rail $from={18} $size={58}><i /></Rail>}
      </Panes>
      <StatusBar>
        <span>{off ? "0 items" : ""}</span>
        <Spacer />
        <ViewToggle $on aria-label="Details view"><CopyListIcon /></ViewToggle>
        <ViewToggle aria-label="Large thumbnails"><ThumbIcon /></ViewToggle>
      </StatusBar>
    </Win>
  );
}

/* ---------- taskbar ---------- */

const Taskbar = styled.footer`
  position: relative;
  height: 48px;
  flex: none;
  padding-bottom: 2px;
  display: grid;
  grid-template-columns: 1fr auto 1fr;
  background: #dbdbdb;
  border-top: 1px solid #b5b5b5;
`;
const Weather = styled.button`
  justify-self: start;
  padding-left: 18px;
  display: flex;
  align-items: center;
  gap: 4px;
  text-align: left;
  line-height: 16px;
  span { display: block; color: #555; }
`;
const Dock = styled.div`
  display: flex;
  align-items: center;
`;
const DockButton = styled.button<{ $mark?: "run" | "active" | "alert" }>`
  position: relative;
  width: 44px;
  height: 44px;
  display: grid;
  place-items: center;
  ${(p) => p.$mark === "active" && css`
    background: linear-gradient(#f3f3f3, #f3f3f3) center / 38px 40px no-repeat;
  `}
  ${(p) => p.$mark === "alert" && css`
    background: linear-gradient(#e8aca8, #e8aca8) center / 40px 40px no-repeat;
  `}
  ${(p) => p.$mark && css`
    &::after {
      content: "";
      position: absolute;
      bottom: 2px;
      width: ${p.$mark === "active" ? 16 : 6}px;
      height: 3px;
      border-radius: 2px;
      background: ${{ run: "#868686", active: "#0078d4", alert: "#c42b1c" }[p.$mark]};
    }
  `}
`;
const DockSearch = styled.label`
  width: 217px;
  height: 31px;
  margin: 0 4px;
  padding: 0 2px 0 11px;
  display: flex;
  align-items: center;
  gap: 10px;
  overflow: hidden;
  border-radius: 16px;
  background: #f5f5f5;
  box-shadow: 0 0 0 1px #c9c9c9;
  font-size: 13px;
  input { flex: 1; min-width: 0; outline: 0; }
  input::placeholder { color: #5a5a5a; opacity: 1; }
`;
const Tray = styled.div`
  justify-self: end;
  padding-right: 19px;
  display: flex;
  align-items: center;
  gap: 16px;
  button { display: block; }
`;
const NetGroup = styled.button`
  && { display: flex; gap: 7px; }
`;
const Clock = styled.time`
  width: 56px;
  text-align: right;
  line-height: 16px;
  white-space: nowrap;
`;

const NumberBadge = ({ cx, cy, r = 8 }: { cx: number; cy: number; r?: number }) => (
  <g>
    <circle cx={cx} cy={cy} r={r} fill="#c42b1c" />
    <text x={cx} y={cy + 4} textAnchor="middle" fontSize="11" fontFamily="Open Sans, sans-serif" fill="#fff">1</text>
  </g>
);

const WeatherIcon = () => (
  <svg width="29" height="32" viewBox="0 0 29 32">
    <path d="M6 29a5 5 0 0 1-.5-10A7.500 7.500 0 0 1 19 18a5.500 5.500 0 0 1 .5 11z" fill="#8bb8f2" />
    <path d="M6 25.500a4 4 0 0 1 0-6.500A7.500 7.500 0 0 1 19 18a5 5 0 0 1 4 7.500z" fill="#bcd7fa" />
    <NumberBadge cx={20} cy={8} />
  </svg>
);
const WindowsIcon = () => (
  <svg width="24" height="24" viewBox="0 0 24 24">
    <defs><linearGradient id="win" x1="0" y1="0" x2="1" y2="1"><stop offset="0" stopColor="#4cc2f5" /><stop offset="1" stopColor="#0a72d0" /></linearGradient></defs>
    <path d="M.5.5h11v11H.5zM12.500.5h11v11h-11zM.5 12.500h11v11H.5zM12.500 12.500h11v11h-11z" fill="url(#win)" />
  </svg>
);
const LandscapeArt = () => (
  <svg width="50" height="22" viewBox="0 0 50 22">
    <circle cx="11" cy="13" r="5" fill="#f59a3a" />
    <path d="M7 21l5-6 4-12 9-1 8 4 8-5 6 2 3 6-1 8-5 4z" fill="#3a3a4c" />
    <path d="M20 3l5-1 1 9 1 10h-6z" fill="#f6a21e" />
    <path d="M15 21l4-16 1 16zM33 21l4-8 6-3 4 11z" fill="#6f6c80" />
    <path d="M26 3l5 4-2 14h-3z" fill="#8c6a58" />
    <path d="M4 21V8M4 8L1 11M4 8l3 3M4 12l-4 3M4 12l4 3M4 16l-3 3M4 16l3 3" stroke="#5a8a2c" strokeWidth="2" />
  </svg>
);
const TaskViewIcon = () => (
  <svg width="24" height="24" viewBox="0 0 24 24"><rect x="0" y="7" width="18" height="16" rx="1" fill="#262626" /><rect x="6" y="1" width="18" height="15" rx="1" fill="#fff" opacity=".8" /></svg>
);
const ExplorerIcon = () => (
  <svg width="24" height="24" viewBox="0 0 24 24">
    <path d="M0 3a1.500 1.500 0 0 1 1.500-1.500h7l2 3H23a1 1 0 0 1 1 1V22H0z" fill="#e0a00e" /><path d="M0 6h24v16H1a1 1 0 0 1-1-1z" fill="#ffd04a" />
    <path d="M4 23v-4.500A2.500 2.500 0 0 1 6.500 16h11a2.500 2.500 0 0 1 2.500 2.500V23z" fill="#1370c4" /><path d="M7 20h10" stroke="#063f7c" strokeWidth="1.500" />
  </svg>
);
const EdgeIcon = () => (
  <svg width="24" height="24" viewBox="0 0 24 24">
    <defs>
      <linearGradient id="edgeTop" x1="0" y1="0" x2="1" y2=".4"><stop offset="0" stopColor="#1a9bdc" /><stop offset=".6" stopColor="#35c1c9" /><stop offset="1" stopColor="#66d35c" /></linearGradient>
    </defs>
    <circle cx="12" cy="12" r="12" fill="#0e67bd" />
    <path d="M0 11.500C1 4 6.500 0 12 0c7 0 12 4.800 12 10 0 4-3 6-6.500 6-3 0-4-1.500-3-2.800 1.500-2.200-.5-5.200-4-5.200C5.500 8 1.500 10 0 11.500z" fill="url(#edgeTop)" />
    <path d="M8.500 8.300C5.500 11 6.500 20 16 20.500c2 .1 4-.5 5.300-1.500-2.800 4.500-8 5.500-12 4.600C3 21 1.500 12.500 8.500 8.300z" fill="#0c4a94" />
    <path d="M10.500 11.500c-1.800 3 1.500 8.500 8 7.500 2-.3 3-1 3.500-2" fill="none" stroke="#dbdbdb" strokeWidth="2" />
  </svg>
);
const StoreIcon = () => (
  <svg width="24" height="24" viewBox="0 0 24 24">
    <path d="M7 6V2.500C7 1.500 7.500 1 8.500 1h7c1 0 1.500.5 1.500 1.500V6" {...stroke("#37b8ee", 2)} /><path d="M.5 5h23v16a2.500 2.500 0 0 1-2.500 2.500H3A2.500 2.500 0 0 1 .5 21z" fill="#1a4e85" />
    <path d="M7 9.500h4.500V14H7z" fill="#f25022" /><path d="M12.500 9.500H17V14h-4.500z" fill="#7fba00" /><path d="M7 15h4.500v4.500H7z" fill="#00a4ef" /><path d="M12.500 15H17v4.500h-4.500z" fill="#ffb900" />
  </svg>
);
const InkIcon = () => (
  <svg width="24" height="24" viewBox="0 0 24 24">
    <path d="M12 12C3 14 0 10 1 5.500 2 1 8 0 10.500 3c1.800 2 2 6 1.500 9z" fill="#0e63ad" />
    <path d="M12 12c0-5 2-9 6.500-9 4 0 5 4 3 6.500-2 2.200-6 3-9.500 2.500z" fill="#d81b7c" />
    <path d="M12 12c.5 6-1.500 10-5.500 10-3.500 0-4.500-4-2.500-6.500 1.500-2 5-3.500 8-3.500z" fill="#f4d41c" />
    <path d="M12 12c5-.5 9 1.500 9.500 5 .3 3.500-3 5.500-6 4-2.500-1.500-3.500-5.500-3.500-9z" fill="#2c2a28" />
    <circle cx="6" cy="5" r="2" fill="#5aa4e0" /><circle cx="18" cy="18.500" r="1.300" fill="#aaa" />
  </svg>
);
const WasatchIcon = () => (
  <svg width="24" height="24" viewBox="0 0 24 24">
    <circle cx="12" cy="12" r="11" fill="#fff" stroke="#b8289c" strokeWidth="1.800" />
    <path d="M12 1a11 11 0 0 1 11 11" fill="none" stroke="#2c2c20" strokeWidth="1.800" /><path d="M1 12a11 11 0 0 0 7 10" fill="none" stroke="#18b0c8" strokeWidth="1.800" />
    <path d="M4.500 8l3.700 6.500L12 9.500l3.700 5L19.500 8" fill="none" stroke="#dc1c20" strokeWidth="3" />
  </svg>
);
const FlameIcon = () => (
  <svg width="24" height="24" viewBox="0 0 24 24">
    <defs><radialGradient id="flame" cx=".5" cy=".5" r=".5"><stop offset="0" stopColor="#ffb0a8" /><stop offset=".45" stopColor="#f0433f" /><stop offset="1" stopColor="#cc1220" /></radialGradient></defs>
    <circle cx="12" cy="12" r="12" fill="url(#flame)" /><path d="M12 3c2.500 2 4 4.500 4 7.500a4 4.500 0 0 1-8 0C8 7.500 9.500 5 12 3z" fill="#fff" />
  </svg>
);
const ExcelIcon = () => (
  <svg width="24" height="24" viewBox="0 0 24 24">
    <rect x="6" y="1" width="18" height="21" rx="1.500" fill="#1d9a5b" /><path d="M15 1h7.500A1.500 1.500 0 0 1 24 2.500V8h-9z" fill="#34c481" /><path d="M6 15h18v5.500a1.500 1.500 0 0 1-1.500 1.500h-15A1.500 1.500 0 0 1 6 20.500z" fill="#155c37" />
    <rect x="0" y="6" width="12" height="12" rx="1" fill="#107c41" /><path d="M3.500 8.500l5 7M8.500 8.500l-5 7" stroke="#fff" strokeWidth="1.800" />
  </svg>
);
const ViewerIcon = () => (
  <svg width="24" height="24" viewBox="0 0 24 24"><rect width="24" height="24" rx="2" fill="#0b0b4e" /><circle cx="12" cy="12" r="10" fill="#fff" /><path d="M4 12l5-3.500v2.300h6V8.500l5 3.500-5 3.500v-2.300H9v2.300z" fill="#0b0b4e" /></svg>
);
const TeamsIcon = () => (
  <svg width="32" height="34" viewBox="0 0 32 34">
    <circle cx="15" cy="11" r="3.500" fill="#7b83eb" /><path d="M10 15h16v7a7 7 0 0 1-14 3z" fill="#7b83eb" /><rect x="4" y="12" width="12" height="12" rx="1" fill="#4b53bc" />
    <path d="M7.500 15.300h5M10 15.300V21" stroke="#fff" strokeWidth="1.500" /><NumberBadge cx={24} cy={8} />
  </svg>
);
const OutlookIcon = () => (
  <svg width="34" height="34" viewBox="0 0 34 34">
    <path d="M11 8h15l3 8v12H11z" fill="#28a8ea" /><path d="M11 20l9 3 9-7v10a2 2 0 0 1-2 2H11z" fill="#50d0f8" /><rect x="5" y="10" width="15" height="15" rx="1" fill="#0a6cc4" />
    <circle cx="12.500" cy="17.500" r="3.600" fill="none" stroke="#fff" strokeWidth="1.900" /><circle cx="26" cy="8" r="7.500" fill="#5fc4f2" />
    <path d="M21.500 4.500h9v7h-9zM21.500 5l4.500 3.500L30.500 5" {...stroke("#14202b", 1.1)} />
  </svg>
);
const GearIcon = () => (
  <svg width="24" height="24" viewBox="0 0 24 24">
    {[0, 60, 120].map((a) => <rect key={a} x="8.500" y="0" width="7" height="24" rx="1.500" fill="#707880" transform={`rotate(${a + 30} 12 12)`} />)}
    <circle cx="12" cy="12" r="9.500" fill="#7d858d" /><circle cx="12" cy="12" r="5.500" fill="#dbdbdb" /><circle cx="12" cy="12" r="4.200" fill="#0f5ea8" />
  </svg>
);

type DockApp = { name: string; icon: React.ReactNode; mark?: "run" | "active" | "alert" };
const dockApps: DockApp[] = [
  { name: "Task View", icon: <TaskViewIcon /> },
  { name: "Copilot", icon: <Copilot /> },
  { name: "File Explorer", icon: <ExplorerIcon />, mark: "active" },
  { name: "Edge", icon: <EdgeIcon />, mark: "run" },
  { name: "Store", icon: <StoreIcon /> },
  { name: "Ink", icon: <InkIcon />, mark: "run" },
  { name: "Wasatch", icon: <WasatchIcon />, mark: "run" },
  { name: "Cutter", icon: <FlameIcon />, mark: "run" },
  { name: "Cutter 2", icon: <FlameIcon />, mark: "run" },
  { name: "Excel", icon: <ExcelIcon />, mark: "run" },
  { name: "Remote", icon: <ViewerIcon />, mark: "run" },
  { name: "Teams", icon: <TeamsIcon />, mark: "alert" },
  { name: "Outlook", icon: <OutlookIcon />, mark: "run" },
  { name: "Settings", icon: <GearIcon />, mark: "run" },
];

/* ---------- cursor ---------- */

const Pointer = styled.svg`
  position: absolute;
  left: 650px;
  top: 525px;
`;

/* ---------- page data ---------- */

const subItems = [
  { label: "Match Bins", icon: <FaSortAlphaDown /> },
  { label: "Production Bins", icon: <FaSortAlphaDown /> },
  { label: "Carts", icon: <FaShoppingCart /> },
  { label: "Designs", icon: <FaLeaf /> },
  { label: "Products", icon: <FaBoxes /> },
  { label: "Employees", icon: <FaUsers /> },
  { label: "Custom Tags", icon: <FaTag /> },
  { label: "Inserts", icon: <FaStar /> },
  { label: "Service Requests", icon: <FaQuestionCircle /> },
];
const leafItems = ["View", "Dashboard", "Batch Sort", "Pick Batch", "Print Batch"];
const createdAt = [
  "2025-02-13 14:09:54 -0600",
  "2025-02-14 15:37:35 -0600",
  "2025-02-14 09:33:03 -0600",
  "2025-02-14 12:52:06 -0600",
  "2025-02-14 15:00:14 -0600",
  "2025-02-14 15:31:53 -0600",
  "2025-02-14 15:31:53 -0600",
  "2025-02-14 17:49:23 -0600",
];
const columnWidths = [71, 105, 111, 287, 207, 133, 337, 93];

function TurbinePage() {
  return (
    <Viewport>
      <Sidebar>
        <Brand>
          <Turbine size={28} ring="#fff" blade="#fff" />
          <Wordmark>TURBINE</Wordmark>
          <Version>1.7.0</Version>
          <Burger aria-label="Toggle menu"><i /><i /><i /></Burger>
        </Brand>
        <nav>
          <MainLink href="#"><FaClock size={17} /><span>Production</span><em /><Chevron dir="right" width={1.3} /></MainLink>
          <MainLink href="#"><FaTruck size={20} /><span>Inventory</span><em /><Chevron dir="right" width={1.3} /></MainLink>
          <MainLink href="#" $open><FaCog size={17} /><span>Manage</span><em>3</em><Chevron width={1.6} /></MainLink>
          <SubLink href="#"><SubIcon><FaFile size={14} /></SubIcon>Orders<Spacer /><Chevron dir="right" /></SubLink>
          <SubLink href="#"><SubIcon><FaBriefcase size={14} /></SubIcon>Jobs<Spacer /><Chevron dir="right" /></SubLink>
          <SubLink href="#" $open><SubIcon><FaAlignCenter size={13} /></SubIcon>Batches<Spacer /><Chevron /></SubLink>
          {leafItems.map((l) => <LeafLink key={l} href="#">{l}</LeafLink>)}
          {subItems.map((s) => <SubLink key={s.label} href="#"><SubIcon>{s.icon}</SubIcon>{s.label}</SubLink>)}
        </nav>
      </Sidebar>
      <Content>
        <TopBar>
          <h1><FaCog size={16} />Manage</h1>
          <Place>Cedar Park, TX</Place>
          <FaGlobeAmericas size={13} />
          <Greeting>Hi, <b>Emma Farrell</b></Greeting>
          <Avatar>E</Avatar>
        </TopBar>
        <SubHeader>
          <h2>Batches</h2>
          <Crumbs>
            <a href="#"><FaHome size={14} />Home</a><i />
            <a href="#">&nbsp;Manage</a><i />
            <span>Batches</span>
          </Crumbs>
        </SubHeader>
        <Body>
          <TitleRow>
            <h2><FaAlignCenter size={20} />Batch - 3258</h2>
            <Action $bg="#6459a5">Orders</Action>
            <Action $bg="#ffb822" $dark><FaCheck size={13} />Complete Batch</Action>
            <Action $bg="#5867dd">View Activity</Action>
          </TitleRow>
          <DetailCard $top={15}>
            <Facts>
              <dt>Status</dt><dd>Active</dd>
              <dt>Batch Type</dt><dd>Manage Print</dd>
            </Facts>
            <Pickers>
              <Picker aria-label="Printer"><option></option></Picker>
              <Picker aria-label="Cutter"><option></option></Picker>
            </Pickers>
          </DetailCard>
          <TableCard $top={99}>
            <table>
              <colgroup>{columnWidths.map((w, i) => <col key={i} width={w} />)}<col /></colgroup>
              <thead>
                <tr><th /><th /><th /><th /><th /><th /><th /><th>Locked At</th><th>Created At</th></tr>
              </thead>
              <tbody>
                {createdAt.map((c, i) => (
                  <tr key={i}>
                    <td><a href="#">442744</a></td><td><a href="#">24406</a></td><td><a href="#">#LEX1000</a></td><td><a href="#">SH F 2 + P BLACK XL</a></td>
                    <td>dtf</td><td>On Order</td><td>Normal</td><td /><td>{c}</td>
                  </tr>
                ))}
              </tbody>
            </table>
          </TableCard>
        </Body>
      </Content>
      <ScrollRail><i /></ScrollRail>
    </Viewport>
  );
}

export default function App() {
  return (
    <Desktop>
      <GlobalStyle />
      <Browser>
        <TabStrip>
          <StripButton $w={42} aria-label="Profile">
            <svg width="24" height="24" viewBox="0 0 24 24"><circle cx="12" cy="12" r="12" fill="#fff" /><circle cx="12" cy="8" r="3.800" fill="#808080" /><path d="M6 14.500h12c0 3.500-2.500 5.500-6 5.500s-6-2-6-5.500z" fill="#808080" /></svg>
          </StripButton>
          <StripButton $w={40} aria-label="Workspaces">
            <svg width="17" height="17" viewBox="0 0 17 17"><path d="M8 4.500l5-2c1.500-.5 2.500.2 2.500 1.500v6c0 1-.5 1.700-1.500 2l-4 1.800c-1.300.5-2-.2-2-1.300zM5.500 13V5.500C5.500 4 6 3.500 7 3l5-2M3 11.500V4.500C3 3 3.500 2.500 4.500 2L8 .8M5.500 13c0 1.500.5 2.500 2 2.800M3 11.500c0 1 .3 1.800 1 2.300" {...stroke("currentColor", 1.1)} /></svg>
          </StripButton>
          <StripButton $w={48} aria-label="Tab actions">
            <svg width="15" height="15" viewBox="0 0 15 15"><rect x="1" y="1" width="13" height="13" rx="2.500" {...stroke("currentColor", 1.3)} /><path d="M1.500 1.500h12v3h-12z" fill="currentColor" /><path d="M5 4v10" {...stroke()} /></svg>
          </StripButton>
          <Bar $h={20} $c="#4d868f" />
          <BrowserTab>
            <Turbine size={17} ring="#141414" blade="#141414" />
            <TabTitle $fade>Turbine | POD Order &amp; Warehouse</TabTitle>
            <button aria-label="Close tab"><Close size={9} /></button>
          </BrowserTab>
          <BrowserTab $active>
            <Turbine size={17} ring="#141414" blade="#141414" />
            <TabTitle $fade>Turbine | POD Order &amp; Warehouse</TabTitle>
            <button aria-label="Close tab"><Close size={9} /></button>
          </BrowserTab>
          <BrowserTab>
            <Loom />
            <TabTitle>Library | Loom</TabTitle>
            <button aria-label="Close tab"><Close size={9} /></button>
          </BrowserTab>
          <Bar $h={20} $c="#4d868f" />
          <StripButton $w={44} aria-label="New tab"><Plus size={14} /></StripButton>
          <Spacer />
          <CaptionButtons $c="#41757d">
            <button aria-label="Minimize"><Minimize /></button>
            <button aria-label="Restore"><Restore /></button>
            <button aria-label="Close"><Close /></button>
          </CaptionButtons>
        </TabStrip>
        <AddressRow>
          <StripButton $w={45} aria-label="Back"><Arrow size={17} /></StripButton>
          <StripButton $w={45} aria-label="Refresh"><Reload size={17} /></StripButton>
          <AddressBox>
            <svg width="14" height="16" viewBox="0 0 14 16"><rect x="1" y="5.500" width="12" height="9.500" rx="2" {...stroke("currentColor", 1.2)} /><path d="M4.500 5.500V3a2.500 2.500 0 0 1 5 0v2.500" {...stroke("currentColor", 1.2)} /><circle cx="7" cy="10.300" r="1" fill="currentColor" /></svg>
            <Url>https://<b>turbine-demo.240tech.com</b>/manage/batches/3258</Url>
            <svg width="20" height="16" viewBox="0 0 20 16"><path d="M1 14L5.500 3 10 14M2.700 10.500h5.700M10.500 3.500c1 .8 1.200 2 .8 3.200M12.500 1.500c2 1.500 2.600 4.200 1.600 6.800" {...stroke()} /></svg>
            <svg width="18" height="18" viewBox="0 0 18 18"><path d="M9 1.500l2.300 4.900 5.200.7-3.800 3.700.9 5.400L9 13.600l-4.600 2.600.9-5.400L1.500 7.100l5.200-.7z" {...stroke("currentColor", 1.1)} /></svg>
          </AddressBox>
          <StripButton $w={46} aria-label="Favorites">
            <svg width="18" height="18" viewBox="0 0 18 18"><path d="M11 6.300L8.500 1.200 6.200 6.100 1 6.800l3.800 3.700-.9 5.400 4-2.200M12 8.500h5M11 11.500h6M12 14.500h5M12.500 6.300h4.500" {...stroke("#000", 1.1)} /></svg>
          </StripButton>
          <StripButton $w={42} aria-label="Menu"><Dots /></StripButton>
          <StripButton $w={43} aria-label="Copilot"><Copilot size={23} /></StripButton>
        </AddressRow>
        <Bookmarks>
          <a href="#">
            <svg width="17" height="16" viewBox="0 0 17 16"><path d="M6 14H3a2 2 0 0 1-2-2V3.500a2 2 0 0 1 2-2h3L8 3.500h5.500a2 2 0 0 1 2 2V9M8 13h7M10 11l-2 2 2 2M13 11l2 2-2 2M1 5.500h4.500L8 3.500" {...stroke("#222", 1.1)} /></svg>
            Import favorites
          </a>
          <Bar $h={16} $c="#a9bfc3" />
          <a href="#">
            <svg width="14" height="16" viewBox="0 0 14 16"><path d="M8 0c1 3 5 5 5 10a6 6 0 0 1-12 0c0-3 2-4 3-6 1 1 1 2 1 2 2-1 3-3 3-6z" fill="#e5127d" /><path d="M1 10a6 6 0 0 0 6 6c-3-2-4-5-3-9-2 1-3 2-3 3z" fill="#18a8e0" /><path d="M8 0c1 3 5 5 5 10l-3-2C10 5 7 4 8 0z" fill="#f7b71d" /><circle cx="8" cy="11" r="3" fill="#111" /></svg>
            240 Tech Portal
          </a>
          <a href="#"><Turbine size={16} ring="#141414" blade="#141414" />Turbine</a>
        </Bookmarks>
        <TurbinePage />
      </Browser>
      <ChatButton aria-label="Open chat">
        <svg width="22" height="24" viewBox="0 0 22 24"><path d="M3 0h16a3 3 0 0 1 3 3v21l-4-2.500H3a3 3 0 0 1-3-3V3a3 3 0 0 1 3-3z" fill="#fff" /><path d="M4 15.500c4 3.300 10 3.300 14 0" {...stroke("#4a6cf7", 1.5)} /></svg>
      </ChatButton>
      <DarkPanel />
      <Explorer
        x={460} y={216} title="cutter" icon={<Folder />}
        path={["This PC", "Windows (C:)", "tmp", "cutter"]} places={cutterPlaces} files={files}
      />
      <Explorer
        x={147} y={473} focus title="USB Drive (D:)" icon={<DriveIcon />}
        path={["USB Drive (D:)"]} places={usbPlaces}
      />
      <Pointer width="13" height="19" viewBox="0 0 13 19">
        <path d="M1 1v14.500l3.400-3.200 2.300 5.400 2.300-1-2.300-5.200H11.500z" fill="#fff" stroke="#000" />
      </Pointer>
      <Taskbar>
        <Weather><WeatherIcon /><div>22°F<span>Cloudy</span></div></Weather>
        <Dock>
          <DockButton aria-label="Start"><WindowsIcon /></DockButton>
          <DockSearch>
            <Magnifier size={15} width={1.4} />
            <input placeholder="Search" aria-label="Search" />
            <LandscapeArt />
          </DockSearch>
          {dockApps.map((a) => <DockButton key={a.name} aria-label={a.name} $mark={a.mark}>{a.icon}</DockButton>)}
        </Dock>
        <Tray>
          <button aria-label="Hidden icons"><Chevron dir="up" size={14} width={0.8} /></button>
          <button aria-label="OneDrive">
            <svg width="17" height="16" viewBox="0 0 17 16"><path d="M4 12a3.500 3.500 0 0 1-.5-7A5 5 0 0 1 13 5.500c2 .3 3 2 3 3.500 0 2-1.500 3-3 3z" fill="#8b8b8b" stroke="#555" /><circle cx="12" cy="11" r="5" fill="#d81f26" /><path d="M10.200 9.200l3.600 3.600M13.800 9.200l-3.600 3.600" {...stroke("#fff", 1.2)} /></svg>
          </button>
          <button aria-label="Microphone">
            <svg width="14" height="17" viewBox="0 0 14 17"><rect x="4.500" y="1" width="5" height="9" rx="2.500" {...stroke("#1e5a9e", 1.3)} /><path d="M1.500 8c0 6.500 11 6.500 11 0M7 13v3" {...stroke("#1e5a9e", 1.3)} /></svg>
          </button>
          <NetGroup aria-label="Network and volume">
            <svg width="17" height="14" viewBox="0 0 17 14"><path d="M1 5.500c4.200-5 10.800-5 15 0M3.500 8c3-3.300 7-3.300 10 0M6 10.300c1.500-1.500 3.500-1.500 5 0" {...stroke("#222", 1.1)} /><circle cx="8.500" cy="12" r="1.400" fill="#222" /></svg>
            <svg width="17" height="14" viewBox="0 0 17 14"><path d="M1 5v4h2.500L7 12.500v-11L3.500 5zM9.500 5c1 1 1 3 0 4M11.800 3c2 2.200 2 5.800 0 8M14 1c3 3.400 3 8.600 0 12" {...stroke("#222", 1.1)} /></svg>
          </NetGroup>
          <Clock>10:38 AM<br />2/19/2025</Clock>
        </Tray>
      </Taskbar>
    </Desktop>
  );
}
